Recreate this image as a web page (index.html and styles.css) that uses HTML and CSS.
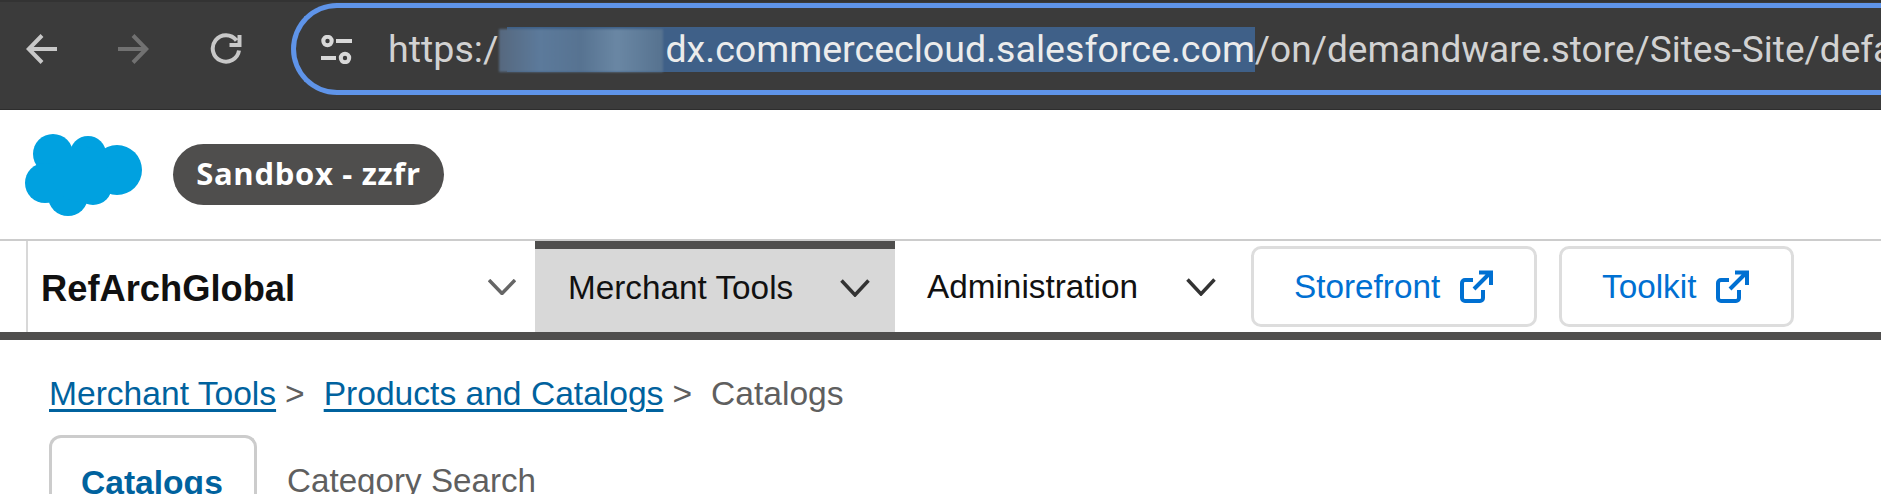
FILE: index.html
```html
<!DOCTYPE html>
<html lang="en">
<head>
<meta charset="utf-8">
<title>Catalogs</title>
<link rel="stylesheet" href="styles.css">
</head>
<body>
<header class="browser">
  <svg class="nav-icon back" viewBox="0 0 32 32"><path d="M31 16H3M16 2.500 2.800 16 16 29.500"/></svg>
  <svg class="nav-icon forward" viewBox="0 0 32 32"><path d="M1 16H29M16 2.500 29.200 16 16 29.500"/></svg>
  <svg class="nav-icon reload" viewBox="0 0 32 32"><path d="M26.500 7.500A13.200 13.200 0 1 0 29 17.500M29.500 2V12H19.500"/></svg>
  <div class="omnibox">
    <svg class="tune" viewBox="0 0 31 29"><circle cx="6.500" cy="6" r="4.200"/><path d="M15 6H31M0 23H15"/><circle cx="24" cy="23" r="4.200"/></svg>
    <span class="url">https:/</span><span class="selection"><span class="redact"></span><span class="url-host">dx.commercecloud.salesforce.com</span></span><span class="url url-path">/on/demandware.store/Sites-Site/default</span>
  </div>
</header>
<section class="brand">
  <svg class="logo" viewBox="0 0 117 82"><circle cx="28" cy="20" r="20"/><circle cx="63" cy="20" r="18"/><circle cx="92" cy="36" r="25"/><circle cx="20" cy="49" r="20"/><circle cx="43" cy="62" r="20"/><circle cx="68" cy="52" r="19"/><circle cx="55" cy="40" r="28"/></svg>
  <span class="pill">Sandbox - zzfr</span>
</section>
<nav class="menu">
  <div class="site"><span class="site-name">RefArchGlobal</span><svg class="chev chev-site" viewBox="0 0 28 16"><path d="M1 1 14 14.500 27 1"/></svg></div>
  <div class="tab-menu active"><span>Merchant Tools</span><svg class="chev" viewBox="0 0 30 18"><path d="M1.500 1.500 15 16 28.500 1.500"/></svg></div>
  <div class="tab-menu admin"><span>Administration</span><svg class="chev" viewBox="0 0 30 18"><path d="M1.500 1.500 15 16 28.500 1.500"/></svg></div>
  <a class="ext storefront">Storefront<svg viewBox="0 0 33 33"><path d="M13 10H5a3 3 0 0 0-3 3V28a3 3 0 0 0 3 3H20a3 3 0 0 0 3-3V20M14 19 30 3M19 2.500H31V15"/></svg></a>
  <a class="ext toolkit">Toolkit<svg viewBox="0 0 33 33"><path d="M13 10H5a3 3 0 0 0-3 3V28a3 3 0 0 0 3 3H20a3 3 0 0 0 3-3V20M14 19 30 3M19 2.500H31V15"/></svg></a>
</nav>
<main class="content">
  <div class="crumbs"><a>Merchant Tools</a><span class="sep">&gt;</span><a>Products and Catalogs</a><span class="sep">&gt;</span><span class="here">Catalogs</span></div>
  <div class="tabs"><span class="tab current">Catalogs</span><span class="tab">Category Search</span></div>
</main>
</body>
</html>
```
FILE: styles.css
```css
* { box-sizing: border-box; }
html, body { margin: 0; height: 494px; overflow: hidden; background: #fff; }
body { font-family: "Liberation Sans", Arial, sans-serif; }
.browser { height: 110px; background: #3b3b3b; display: flex; align-items: center; padding: 0 0 13px 26px; border-top: 2px solid #333; border-bottom: 1px solid #2d2d2d; overflow: hidden; }
.nav-icon { width: 32px; height: 32px; fill: none; stroke-width: 4; flex: none; }
.back { stroke: #c8c8c8; }
.forward { stroke: #717171; margin-left: 59px; }
.reload { stroke: #c8c8c8; margin-left: 61px; }
.omnibox { flex: none; width: 1800px; height: 92px; margin-left: 49px; border: 5px solid #5f94e9; border-right: 0; border-radius: 46px 0 0 46px; display: flex; align-items: center; padding-left: 25px; white-space: nowrap; font-family: Roboto, sans-serif; font-size: 37.600px; color: #d2d2d2; }
.tune { width: 31px; height: 29px; flex: none; margin-right: 36px; fill: none; stroke: #d8d8d8; stroke-width: 4; }
.url-path { font-size: 37px; }
.selection { display: flex; align-items: center; height: 45px; background: #3f6088; margin-left: 9px; color: #ececec; }
.redact { width: 164px; height: 43px; margin: 2px 2px 0 -8px; background: linear-gradient(90deg, #56687e, #5c7a9b 25%, #577391 50%, #6a87a4 72%, #56728f); filter: blur(1px); }
.brand { height: 129px; display: flex; align-items: center; padding-left: 25px; gap: 31px; }
.logo { width: 117px; height: 82px; fill: #00a1e0; flex: none; }
.pill { height: 61px; width: 271px; margin-bottom: 1px; padding-bottom: 2px; border-radius: 31px; background: #4f4e4d; color: #fff; font-family: "Open Sans", sans-serif; font-weight: 700; font-size: 31px; letter-spacing: 0.700px; display: flex; align-items: center; justify-content: center; }
.menu { height: 101px; display: flex; border-top: 2px solid #ccc; border-bottom: 8px solid #4f4e4d; padding-left: 26px; font-size: 33.300px; color: #111; }
.site { width: 509px; border-left: 2px solid #d8d8d8; padding-left: 13px; display: flex; align-items: center; }
.site-name { font-weight: 700; font-size: 36.300px; color: #111; padding-top: 4px; }
.chev { width: 30px; height: 18px; flex: none; fill: none; stroke: #333; stroke-width: 3.500; }
.chev-site { width: 28px; height: 16px; stroke: #666; margin-left: 193px; }
.tab-menu { display: flex; align-items: center; padding-left: 33px; padding-bottom: 6px; }
.tab-menu.active { width: 360px; background: #d8d8d8; border-top: 8px solid #4f4e4d; }
.tab-menu.active .chev { margin-left: 47px; }
.tab-menu.admin { width: 356px; padding: 1px 0 0 32px; }
.tab-menu.admin .chev { margin-left: 48px; }
.ext { height: 81px; margin-top: 5px; border: 3px solid #ddd; border-radius: 10px; display: flex; align-items: center; color: #0070d2; padding-left: 40px; gap: 20px; }
.ext svg { width: 33px; height: 33px; flex: none; fill: none; stroke: #0070d2; stroke-width: 4; }
.storefront { width: 286px; }
.toolkit { width: 235px; margin-left: 22px; }
.content { padding: 34px 0 0 49px; font-size: 33.600px; color: #5f5f5f; }
.crumbs { display: flex; line-height: 40px; }
.crumbs a { color: #00629e; text-decoration: underline; text-underline-offset: 4px; }
.sep { margin: 0 19px 0 9px; }
.tabs { display: flex; margin-top: 21px; }
.tab { height: 70px; padding: 27px 0 0 30px; font-size: 33.200px; }
.tab.current { width: 208px; border: 3px solid #ccc; border-bottom: 0; border-radius: 12px 12px 0 0; padding: 26px 0 0 29px; font-size: 33.600px; font-weight: 700; color: #00629e; }
```
